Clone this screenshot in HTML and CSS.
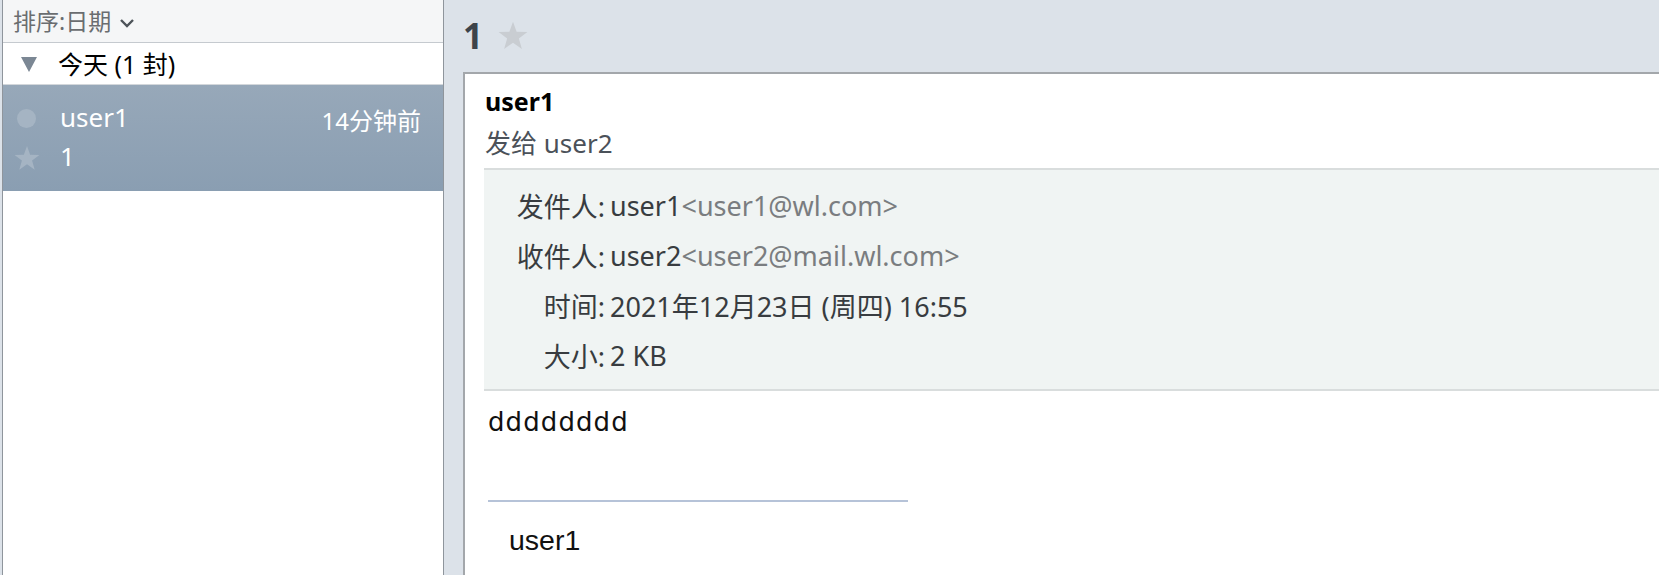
FILE: index.html
```html
<!DOCTYPE html>
<html lang="zh-CN">
<head>
<meta charset="utf-8">
<title>邮件</title>
<link rel="stylesheet" href="styles.css">
</head>
<body>
<div class="app">
  <aside class="list-pane">
    <div class="sort-bar">
      <span>排序:日期</span>
      <svg class="chev" width="16" height="10" viewBox="0 0 16 10"><path d="M2 2 L8 8 L14 2" fill="none" stroke="#4d5359" stroke-width="2.4"/></svg>
    </div>
    <div class="group">
      <svg class="tri" width="16" height="15" viewBox="0 0 16 15"><path d="M0 0 H16 L8 15 Z" fill="#7b8794"/></svg>
      <span>今天 (1 封)</span>
    </div>
    <div class="item selected">
      <span class="dot"></span>
      <span class="sender">user1</span>
      <span class="time">14分钟前</span>
      <svg class="item-star" width="26" height="24" viewBox="0 0 24 22"><path d="M12 0 L14.9 8 L23.5 8.2 L16.7 13.4 L19.1 21.8 L12 16.8 L4.9 21.8 L7.3 13.4 L0.5 8.2 L9.1 8 Z" fill="#a5b4c3"/></svg>
      <span class="subject">1</span>
    </div>
  </aside>
  <main class="read-pane">
    <div class="title-bar">
      <h1 class="title">1</h1>
      <svg class="title-star" width="30" height="29" viewBox="0 0 24 22"><path d="M12 0 L14.9 8 L23.5 8.2 L16.7 13.4 L19.1 21.8 L12 16.8 L4.9 21.8 L7.3 13.4 L0.5 8.2 L9.1 8 Z" fill="#c9cdd2"/></svg>
    </div>
    <section class="card">
      <div class="from-name">user1</div>
      <div class="to-line">发给 user2</div>
      <div class="meta">
        <span class="label">发件人:</span><span class="value">user1<span class="addr">&lt;user1@wl.com&gt;</span></span>
        <span class="label">收件人:</span><span class="value">user2<span class="addr">&lt;user2@mail.wl.com&gt;</span></span>
        <span class="label">时间:</span><span class="value">2021年12月23日 (周四) 16:55</span>
        <span class="label">大小:</span><span class="value">2 KB</span>
      </div>
      <div class="body-text">dddddddd</div>
      <div class="sig">
        <div class="sig-line"></div>
        <div class="sig-name">user1</div>
      </div>
    </section>
  </main>
</div>
</body>
</html>
```

FILE: styles.css
```css
html, body {
  margin: 0;
  height: 100%;
  overflow: hidden;
}
body {
  background: #dce2e9;
  font-family: "Noto Sans", "Noto Sans CJK SC", sans-serif;
}
.app {
  display: flex;
  height: 575px;
}

/* list pane */
.list-pane {
  flex: none;
  width: 440px;
  margin-left: 2px;
  border-left: 1px solid #8f959c;
  border-right: 1px solid #8f959c;
  background: #fff;
}
.sort-bar {
  height: 43px;
  box-sizing: border-box;
  border-bottom: 1px solid #c5cacf;
  background: #f5f6f7;
  display: flex;
  align-items: center;
  gap: 8px;
  padding-left: 10px;
  font-size: 23px;
  line-height: 30px;
  color: #6a6d70;
}
.chev { margin-top: 4px; }
.group {
  height: 42px;
  box-sizing: border-box;
  border-bottom: 1px solid #d3d7db;
  display: flex;
  align-items: center;
  padding-left: 18px;
  gap: 21px;
  font-size: 25px;
  line-height: 30px;
  color: #000;
}
.tri { margin-top: 2px; }
.item.selected {
  height: 106px;
  box-sizing: border-box;
  padding-top: 11px;
  background: linear-gradient(#97a8b9, #8a9eb2);
  color: #fff;
  display: grid;
  grid-template-columns: 57px 1fr auto;
  grid-template-rows: 42px 36px;
  align-items: center;
}
.dot {
  width: 19px;
  height: 19px;
  border-radius: 50%;
  background: #a5b4c3;
  margin-left: 14px;
  margin-top: 3px;
}
.sender {
  font-size: 26px;
  line-height: 40px;
}
.time {
  font-size: 24px;
  line-height: 40px;
  padding-right: 22px;
  margin-top: 7px;
}
.item-star {
  margin-left: 11px;
  margin-top: 3px;
}
.subject {
  font-size: 26px;
  line-height: 36px;
}

/* reading pane */
.read-pane {
  flex: 1;
  min-width: 0;
  overflow: hidden;
}
.title-bar {
  height: 72px;
  display: flex;
  align-items: center;
  gap: 15px;
  padding-left: 19px;
}
.title {
  margin: 0;
  font-size: 35px;
  line-height: 44px;
  font-weight: 700;
  color: #3d434a;
}
.title-star { margin-top: -2px; }
.card {
  width: 1300px;
  margin-left: 19px;
  background: #fff;
  border-top: 2px solid #a3a7ab;
  border-left: 2px solid #a3a7ab;
  padding-left: 20px;
  height: 600px;
}
.from-name {
  padding-top: 10px;
  font-size: 25px;
  line-height: 34px;
  font-weight: 700;
  color: #000;
}
.to-line {
  margin-top: 7px;
  font-size: 26px;
  line-height: 36px;
  color: #4b5159;
}
.meta {
  margin-top: 7px;
  margin-left: -1px;
  background: #f0f4f3;
  border-top: 2px solid #d9dddd;
  border-bottom: 2px solid #d9dddd;
  padding: 10px 0 9px;
  display: grid;
  grid-template-columns: 121px 1fr;
  grid-auto-rows: 50px;
  align-items: center;
  font-size: 27px;
  color: #383c40;
}
.label { text-align: right; }
.value { padding-left: 5px; }
.addr { color: #7a7d80; }
.body-text {
  margin-top: 11px;
  padding-left: 3px;
  font-family: "DejaVu Sans", sans-serif;
  font-size: 26px;
  letter-spacing: 1.1px;
  line-height: 40px;
  color: #111;
}
.sig-line {
  margin-top: 58px;
  margin-left: 3px;
  width: 420px;
  height: 2px;
  background: #b6c3d8;
}
.sig-name {
  margin-top: 18px;
  padding-left: 24px;
  font-family: "Liberation Sans", sans-serif;
  font-size: 28.5px;
  line-height: 40px;
  color: #111;
}
```
